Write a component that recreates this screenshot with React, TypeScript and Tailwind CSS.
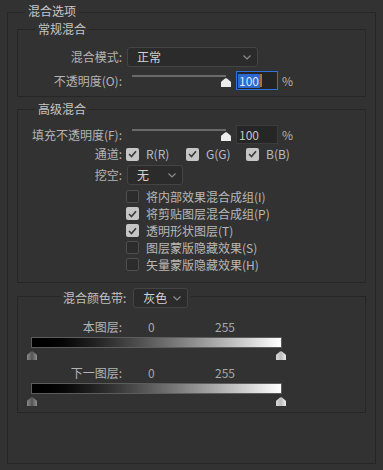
import React from "react"

const font = { fontFamily: '"Noto Sans CJK SC", "Noto Sans", sans-serif' }

function Chevron() {
  return (
    <svg width="8" height="5" viewBox="0 0 8 5" className="shrink-0">
      <path d="M0.5 0.5 L4 4 L7.5 0.5" fill="none" stroke="#8c8c8c" strokeWidth="1.2" />
    </svg>
  )
}

function Select({ value, width }: { value: string; width: string }) {
  return (
    <div
      className={`${width} h-[20px] ml-[5px] flex items-center justify-between pl-[9px] pr-[6px] bg-[#2b2b2b] border border-[#444444] rounded-[3px] text-[12px] text-[#d2d2d2]`}
    >
      <span className="leading-[16px]">{value}</span>
      <Chevron />
    </div>
  )
}

function Check({ checked }: { checked: boolean }) {
  return checked ? (
    <div className="w-[13px] h-[13px] rounded-[2px] bg-[#c6c6c6] flex items-center justify-center shrink-0">
      <svg width="9" height="8" viewBox="0 0 9 8">
        <path d="M1 4 L3.5 6.5 L8 1.2" fill="none" stroke="#3a3a3a" strokeWidth="1.6" />
      </svg>
    </div>
  ) : (
    <div className="w-[13px] h-[13px] rounded-[2px] bg-[#2c2c2c] border border-[#4e4e4e] shrink-0" />
  )
}

function Thumb({ tone }: { tone: "light" | "dark" }) {
  const id = `th-${tone}`
  return (
    <svg width="10" height="9" viewBox="0 0 10 9" className="shrink-0">
      <defs>
        <linearGradient id={id} x1="0" x2="1" y1="0" y2="0">
          {tone === "light" ? (
            <>
              <stop offset="0" stopColor="#d8d8d8" />
              <stop offset="0.5" stopColor="#bdbdbd" />
              <stop offset="1" stopColor="#eeeeee" />
            </>
          ) : (
            <>
              <stop offset="0" stopColor="#8a8a8a" />
              <stop offset="0.5" stopColor="#555555" />
              <stop offset="1" stopColor="#8f8f8f" />
            </>
          )}
        </linearGradient>
      </defs>
      <path d="M4 0.6 Q5 0 6 0.6 L9.6 3.6 Q10 4 10 4.6 L10 9 L0 9 L0 4.6 Q0 4 0.4 3.6 Z" fill={`url(#${id})`} />
    </svg>
  )
}

function Slider() {
  return (
    <div className="relative w-[99px] h-full ml-[10px]">
      <div className="absolute top-[4px] left-0 w-[94px] h-[2px] bg-[#6a6a6a]" />
      <div className="absolute top-[7px] left-[89px]">
        <svg width="10" height="9" viewBox="0 0 10 9">
          <path d="M4 0.6 Q5 0 6 0.6 L9.6 3.6 Q10 4 10 4.6 L10 9 L0 9 L0 4.6 Q0 4 0.4 3.6 Z" fill="#ececec" />
        </svg>
      </div>
    </div>
  )
}

function Label({ children }: { children: React.ReactNode }) {
  return <div className="w-[104px] text-right text-[12px] leading-[16px] text-[#b4b4b4] shrink-0">{children}</div>
}

function GroupTitle({ children }: { children: React.ReactNode }) {
  return (
    <div className="-mt-[9px] ml-[17px] w-fit px-[3px] h-[16px] leading-[16px] bg-[#323232] text-[12px] text-[#c6c6c6]">
      {children}
    </div>
  )
}

function BlendBar({ label }: { label: string }) {
  return (
    <>
      <div className="flex items-center h-[16px] text-[12px] leading-[16px]">
        <Label>{label}</Label>
        <div className="ml-[26px] w-[67px] text-[#a8a8a8]">0</div>
        <div className="text-[#a8a8a8]">255</div>
      </div>
      <div className="mt-[2px] ml-[13px] w-[251px] h-[11px] border border-[#5c5c5c] bg-gradient-to-r from-[#000000] to-[#ffffff]" />
      <div className="mt-[3px] ml-[9px] w-[259px] h-[9px] flex justify-between">
        <Thumb tone="dark" />
        <Thumb tone="light" />
      </div>
    </>
  )
}

const options = [
  { text: "将内部效果混合成组", key: "(I)", checked: false },
  { text: "将剪贴图层混合成组", key: "(P)", checked: true },
  { text: "透明形状图层", key: "(T)", checked: true },
  { text: "图层蒙版隐藏效果", key: "(S)", checked: false },
  { text: "矢量蒙版隐藏效果", key: "(H)", checked: false },
]

export default function App() {
  return (
    <div className="w-[383px] h-[470px] bg-[#323232] pt-[12px] pl-[7px] overflow-hidden" style={font}>
      <div className="w-[369px] h-[452px] border border-[#262626]">
        <div className="-mt-[10px] ml-[17px] w-fit px-[3px] h-[16px] leading-[16px] bg-[#323232] text-[12px] text-[#c8c8c8]">
          混合选项
        </div>

        {/* 常规混合 */}
        <div className="mt-[10px] ml-[9px] w-[349px] h-[68px] border border-[#262626]">
          <GroupTitle>常规混合</GroupTitle>
          <div className="mt-[10px] flex items-center h-[20px]">
            <Label>混合模式:</Label>
            <Select value="正常" width="w-[131px]" />
          </div>
          <div className="mt-[4px] flex items-center h-[19px]">
            <Label>不透明度(O):</Label>
            <Slider />
            <div className="ml-[5px] w-[42px] h-[19px] border border-[#2d74dc] bg-[#242424] flex items-center pl-[1px]">
              <span className="bg-[#2c6ad0] text-[#dfe9ff] text-[12px] leading-[14px] px-[1px]">100</span>
              <span className="w-[2px] h-[13px] bg-[#a8703a]" />
            </div>
            <span className="ml-[4px] text-[12px] text-[#b4b4b4]">%</span>
          </div>
        </div>

        {/* 高级混合 */}
        <div className="mt-[12px] ml-[9px] w-[349px] h-[174px] border border-[#262626]">
          <GroupTitle>高级混合</GroupTitle>
          <div className="mt-[8px] flex items-center h-[19px]">
            <Label>填充不透明度(F):</Label>
            <Slider />
            <div className="ml-[5px] w-[42px] h-[19px] border border-[#3c3c3c] bg-[#262626] flex items-center pl-[2px] text-[12px] text-[#c4c4c4]">
              100
            </div>
            <span className="ml-[4px] text-[12px] text-[#b4b4b4]">%</span>
          </div>
          <div className="mt-[2px] flex items-center h-[16px] text-[12px] leading-[16px]">
            <Label>通道:</Label>
            {["R(R)", "G(G)", "B(B)"].map((c) => (
              <div key={c} className="ml-[4px] w-[56px] flex items-center shrink-0">
                <Check checked />
                <span className="ml-[7px] text-[#b8bcc2]">{c}</span>
              </div>
            ))}
          </div>
          <div className="mt-[3px] flex items-center h-[20px]">
            <Label>挖空:</Label>
            <Select value="无" width="w-[56px]" />
          </div>
          <div className="mt-[3px] flex flex-col">
            {options.map((o) => (
              <div key={o.key} className="h-[17px] flex items-center ml-[108px] text-[12px] leading-[16px]">
                <Check checked={o.checked} />
                <span className="ml-[7px] text-[#b8b8b8]">
                  {o.text}
                  {o.key}
                </span>
              </div>
            ))}
          </div>
        </div>

        {/* 混合颜色带 */}
        <div className="mt-[13px] ml-[9px] w-[349px] h-[117px] border border-[#262626]">
          <div className="-mt-[9px] ml-[42px] w-fit h-[20px] px-[3px] bg-[#323232] flex items-center">
            <span className="text-[12px] leading-[16px] text-[#c0c0c0]">混合颜色带:</span>
            <div className="ml-[2px]">
              <Select value="灰色" width="w-[55px]" />
            </div>
          </div>
          <div className="mt-[11px]">
            <BlendBar label="本图层:" />
          </div>
          <div className="mt-[5px]">
            <BlendBar label="下一图层:" />
          </div>
        </div>
      </div>
    </div>
  )
}
